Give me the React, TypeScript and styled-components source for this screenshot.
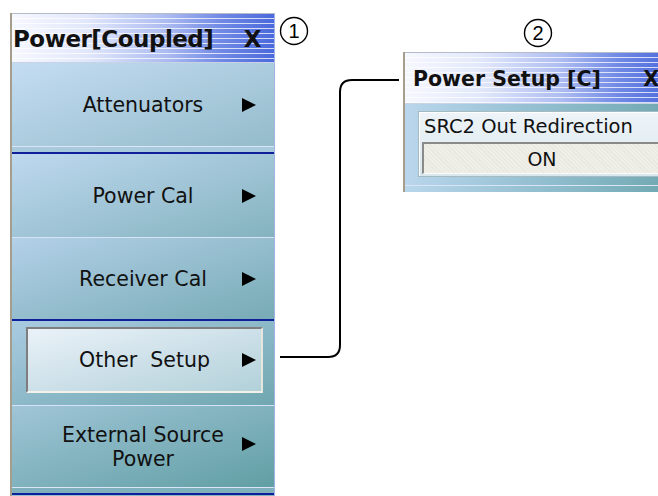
import styled, { createGlobalStyle } from 'styled-components';

const GlobalStyle = createGlobalStyle`
  html, body {
    margin: 0;
    padding: 0;
    background: #ffffff;
  }
`;

const stripes = `repeating-linear-gradient(to bottom, rgba(255,255,255,0) 0px, rgba(255,255,255,0) 4px, rgba(255,255,255,0.75) 4px, rgba(255,255,255,0.75) 5px)`;

const Canvas = styled.div`
  position: relative;
  width: 658px;
  height: 496px;
  overflow: hidden;
  background: #ffffff;
  font-family: "DejaVu Sans", Verdana, sans-serif;
  color: #111;
`;

const Row = styled.div`
  display: flex;
  align-items: flex-start;
  padding: 13px 0 0 10px;
`;

const Panel = styled.div<{ $width: number }>`
  width: ${(p) => p.$width}px;
  flex-shrink: 0;
  box-sizing: border-box;
  border-left: 2px solid #a59e8d;
  border-right: 1px solid #9fb4e2;
  display: flex;
  flex-direction: column;
`;

const TitleBar = styled.div<{ $height: number; $size: number; $pad: number }>`
  height: ${(p) => p.$height}px;
  box-sizing: border-box;
  border-top: 1px solid #b4bccb;
  border-bottom: 1px solid #c9d3e6;
  display: flex;
  align-items: center;
  justify-content: space-between;
  padding: 2px 13px 0 ${(p) => p.$pad}px;
  background: ${stripes},
    linear-gradient(to right, #f6f8ff 0%, #e2e8fb 28%, #aebdf1 58%, #7089e5 80%, #4b69dc 100%);
  font-weight: bold;
  font-size: ${(p) => p.$size}px;
  letter-spacing: ${(p) => (p.$size > 21 ? -0.5 : 0)}px;
  white-space: pre;
`;

const Item = styled.div<{ $height: number; $from: string; $to: string }>`
  height: ${(p) => p.$height}px;
  display: grid;
  grid-template-columns: 1fr auto 1fr;
  align-items: center;
  background: linear-gradient(to bottom right, ${(p) => p.$from}, ${(p) => p.$to});
  font-size: 20.5px;
  line-height: 24px;
  text-align: center;
  white-space: pre;
`;

const ItemLabel = styled.div`
  grid-column: 2;
`;

const Arrow = styled.div<{ $offset?: number }>`
  grid-column: 3;
  justify-self: end;
  margin-right: 18px;
  margin-top: ${(p) => p.$offset ?? 0}px;
  width: 0;
  height: 0;
  border-left: 14px solid #000;
  border-top: 7px solid transparent;
  border-bottom: 7px solid transparent;
`;

const SunkenSlot = styled.div<{ $from: string; $to: string }>`
  height: 84px;
  box-sizing: border-box;
  padding: 6px 11px 12px 14px;
  background: linear-gradient(to bottom right, ${(p) => p.$from}, ${(p) => p.$to});
`;

const SelectedItem = styled.div`
  height: 100%;
  box-sizing: border-box;
  display: grid;
  grid-template-columns: 1fr auto 1fr;
  align-items: center;
  border-top: 2px solid #7e7e7e;
  border-left: 2px solid #7e7e7e;
  border-bottom: 2px solid #f2f2ea;
  border-right: 2px solid #e6e6de;
  background: linear-gradient(to bottom right, #eaf2f8, #c8dde6 60%, #b2d1d9);
  font-size: 20.5px;
  text-align: center;
  white-space: pre;

  ${Arrow} {
    margin-right: 5px;
  }
`;

const Rule = styled.div`
  height: 1px;
  background: #d6e2f6;
`;

const NavyRule = styled.div`
  height: 2px;
  background: #0f1f9a;
`;

const GroupRule = styled.div<{ $from: string }>`
  height: 8px;
  box-sizing: border-box;
  border-top: 1px solid #dae5f7;
  border-bottom: 2px solid #0f1f9a;
  background: ${(p) => p.$from};
`;

const RightWrap = styled.div`
  margin: 39px 0 0 128px;
`;

const SetupBody = styled.div`
  height: 88px;
  box-sizing: border-box;
  padding: 7px 7px 0 13px;
  background: linear-gradient(to right, #b9d6ec, #93bfd0 50%, #6fa8b1);
  display: flex;
  flex-direction: column;
`;

const LabelBox = styled.div`
  height: 67px;
  box-sizing: border-box;
  border: 1px solid #a6bac3;
  box-shadow: inset 1px 1px 0 #ffffff;
  background: linear-gradient(to bottom, #eef4f8, #d8e7ee);
  padding: 0 3px 2px 3px;
  display: flex;
  flex-direction: column;
  justify-content: space-between;
`;

const LabelText = styled.div`
  font-size: 19.5px;
  line-height: 30px;
  padding-left: 2px;
  white-space: pre;
`;

const ValueBox = styled.div`
  height: 32px;
  box-sizing: border-box;
  border-top: 2px solid #8a8a88;
  border-left: 2px solid #8a8a88;
  border-bottom: 1px solid #fbfbf7;
  border-right: 1px solid #fbfbf7;
  background-color: #efeee7;
  background-image: repeating-linear-gradient(45deg, rgba(0,0,0,0.03) 0 1px, transparent 1px 3px);
  display: flex;
  align-items: center;
  justify-content: center;
  font-size: 19px;
`;

const BodyFoot = styled.div`
  margin: 8px -7px 0 -13px;
  height: 6px;
  border-top: 1px solid #d9e6f2;
`;

const Overlay = styled.svg`
  position: absolute;
  left: 0;
  top: 0;
  pointer-events: none;
`;

const Callout = ({ cx, cy, n }: { cx: number; cy: number; n: string }) => (
  <g>
    <circle cx={cx} cy={cy} r={13.5} fill="#fff" stroke="#000" strokeWidth={1.4} />
    <text
      x={cx}
      y={cy + 7}
      textAnchor="middle"
      fontFamily='"Liberation Sans", Arial, sans-serif'
      fontSize={20}
      fill="#000"
    >
      {n}
    </text>
  </g>
);

export default function App() {
  return (
    <Canvas>
      <GlobalStyle />
      <Row>
        <Panel $width={265}>
          <TitleBar $height={50} $size={23} $pad={1}>
            <span>Power[Coupled]</span>
            <span>X</span>
          </TitleBar>

          <Item $height={83} $from="#c4dcf2" $to="#94bccb">
            <ItemLabel>Attenuators</ItemLabel>
            <Arrow />
          </Item>
          <GroupRule $from="#a9c9dc" />

          <Item $height={83} $from="#bed8ef" $to="#84b3bf">
            <ItemLabel>Power Cal</ItemLabel>
            <Arrow />
          </Item>
          <Rule />
          <Item $height={81} $from="#b3d0e8" $to="#77abb5">
            <ItemLabel>Receiver Cal</ItemLabel>
            <Arrow />
          </Item>
          <NavyRule />

          <SunkenSlot $from="#a9cbe1" $to="#70a7b0">
            <SelectedItem>
              <ItemLabel>Other  Setup</ItemLabel>
              <Arrow />
            </SelectedItem>
          </SunkenSlot>
          <Rule />
          <Item $height={81} $from="#a0c5d7" $to="#619fa4">
            <ItemLabel>
              External Source
              <br />
              Power
            </ItemLabel>
            <Arrow $offset={-6} />
          </Item>
          <GroupRule $from="#7fb1bd" />
          <Item $height={20} $from="#9cc3d4" $to="#6ea6ae" />
        </Panel>

        <RightWrap>
          <Panel $width={270}>
            <TitleBar $height={52} $size={20.5} $pad={8}>
              <span>Power Setup [C]</span>
              <span>X</span>
            </TitleBar>
            <SetupBody>
              <LabelBox>
                <LabelText>SRC2 Out Redirection</LabelText>
                <ValueBox>ON</ValueBox>
              </LabelBox>
              <BodyFoot />
            </SetupBody>
          </Panel>
        </RightWrap>
      </Row>

      <Overlay width={658} height={496} viewBox="0 0 658 496">
        <path
          d="M 280 357 H 328 Q 340 357 340 345 V 92 Q 340 80 352 80 H 399"
          fill="none"
          stroke="#000"
          strokeWidth={2}
        />
        <Callout cx={294} cy={31} n="1" />
        <Callout cx={538} cy={33} n="2" />
      </Overlay>
    </Canvas>
  );
}
